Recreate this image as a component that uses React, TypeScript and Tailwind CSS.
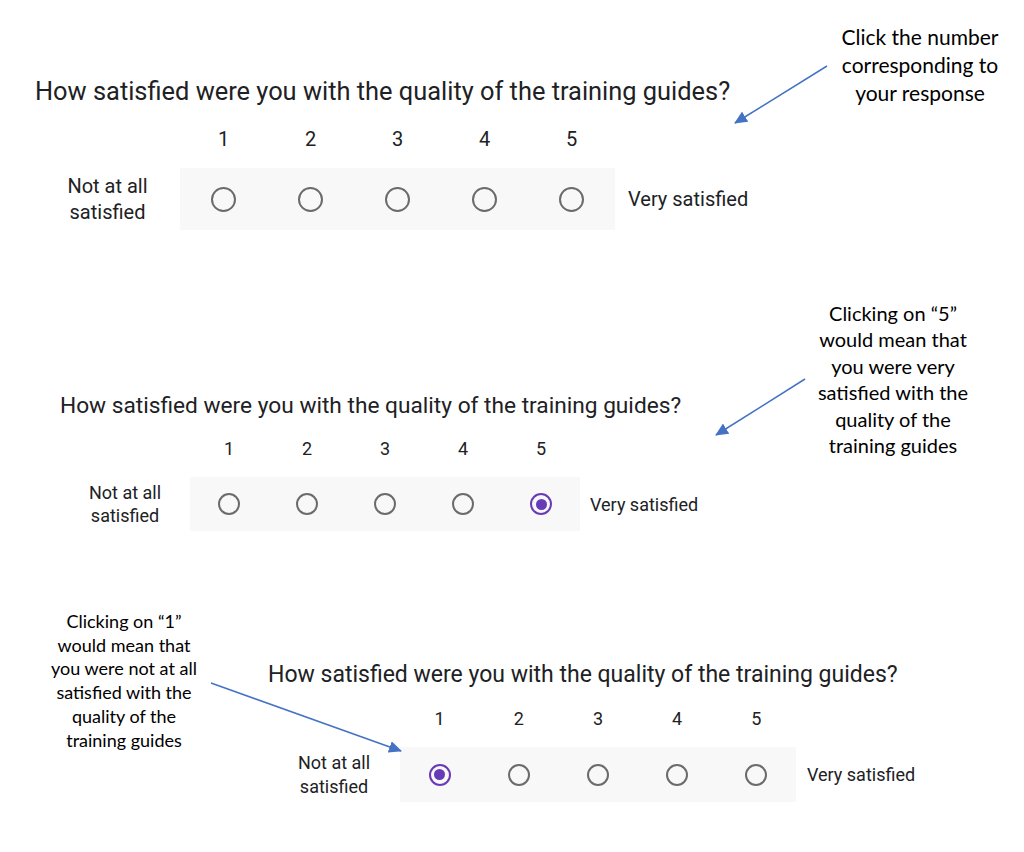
import React from 'react';

type Variant = {
  wrap: string;
  title: string;
  nums: string;
  labelW: string;
  label: string;
  col: string;
  box: string;
  radio: string;
  dot: string;
  end: string;
};

const variants: Record<string, Variant> = {
  top: {
    wrap: 'pl-[35px] pt-[76px]',
    title: 'text-[25.4px] leading-[30px]',
    nums: 'mt-[21px] text-[20px] leading-[24px]',
    labelW: 'w-[145px]',
    label: 'text-[20px] leading-[26.5px]',
    col: 'w-[87px]',
    box: 'mt-[17px] h-[62px]',
    radio: 'size-[25px] border-[2.5px]',
    dot: 'size-[12px]',
    end: 'ml-[13px] text-[20px]',
  },
  middle: {
    wrap: 'pl-[60px] pt-[152px]',
    title: 'text-[22.7px] leading-[27px]',
    nums: 'mt-[19px] text-[18px] leading-[22px]',
    labelW: 'w-[130px]',
    label: 'text-[18px] leading-[23.5px]',
    col: 'w-[78px]',
    box: 'mt-[17px] h-[54px]',
    radio: 'size-[22px] border-[2.2px]',
    dot: 'size-[11px]',
    end: 'ml-[10px] text-[18px]',
  },
  bottom: {
    wrap: 'pl-[49px] pt-[61px]',
    title: 'text-[23px] leading-[27px]',
    nums: 'mt-[20px] text-[18px] leading-[22px]',
    labelW: 'w-[132px]',
    label: 'text-[18px] leading-[23.5px]',
    col: 'w-[79.2px]',
    box: 'mt-[17px] h-[55px]',
    radio: 'size-[22px] border-[2.2px]',
    dot: 'size-[11px]',
    end: 'ml-[11px] text-[18px]',
  },
};

const escala = [1, 2, 3, 4, 5];

function Radio({ v, marcado }: { v: Variant; marcado: boolean }) {
  if (marcado) {
    return (
      <span className={`flex items-center justify-center rounded-full border-[#673ab7] ${v.radio}`}>
        <span className={`rounded-full bg-[#673ab7] ${v.dot}`} />
      </span>
    );
  }
  return <span className={`rounded-full border-[#6b6b6b] ${v.radio}`} />;
}

function Pergunta({ v, escolha }: { v: Variant; escolha?: number }) {
  return (
    <div className={`${v.wrap} font-['Roboto',sans-serif] text-[#202124]`}>
      <h2 className={`whitespace-nowrap ${v.title}`}>
        How satisfied were you with the quality of the training guides?
      </h2>
      <div className={`flex ${v.nums}`}>
        <div className={v.labelW} />
        {escala.map((n) => (
          <div key={n} className={`text-center ${v.col}`}>
            {n}
          </div>
        ))}
      </div>
      <div className="flex items-center">
        <div className={`text-center ${v.labelW} ${v.label} ${v.box} flex flex-col justify-center`}>
          <span>Not at all</span>
          <span>satisfied</span>
        </div>
        <div className={`flex items-center bg-[#f8f8f8] ${v.box}`}>
          {escala.map((n) => (
            <div key={n} className={`flex justify-center ${v.col}`}>
              <Radio v={v} marcado={escolha === n} />
            </div>
          ))}
        </div>
        <div className={`whitespace-nowrap ${v.end} ${v.box} flex items-center`}>Very satisfied</div>
      </div>
    </div>
  );
}

function Nota({ linhas, className }: { linhas: string[]; className: string }) {
  return (
    <div className={`flex flex-col items-center font-['Lato',sans-serif] text-black ${className}`}>
      {linhas.map((l) => (
        <span key={l} className="whitespace-nowrap">
          {l}
        </span>
      ))}
    </div>
  );
}

function Setas() {
  const linhas = [
    [827, 66, 735, 123],
    [805, 379, 716, 435],
    [211, 683, 401, 751],
  ];
  return (
    <svg className="pointer-events-none absolute inset-0" width="1024" height="852">
      <defs>
        <marker id="ponta" markerWidth="14" markerHeight="12" refX="12" refY="6" orient="auto" markerUnits="userSpaceOnUse">
          <path d="M0,0 L13,6 L0,12 Z" fill="#4472c4" />
        </marker>
      </defs>
      {linhas.map(([x1, y1, x2, y2]) => (
        <line key={x1} x1={x1} y1={y1} x2={x2} y2={y2} stroke="#4472c4" strokeWidth="1.5" markerEnd="url(#ponta)" />
      ))}
    </svg>
  );
}

function App() {
  return (
    <div className="relative h-[852px] w-[1024px] overflow-hidden bg-white">
      <section className="flex h-[240px] items-start">
        <Pergunta v={variants.top} />
        <Nota
          className="ml-auto mr-[14px] mt-[23px] w-[180px] text-[21px] leading-[28px]"
          linhas={['Click the number', 'corresponding to', 'your response']}
        />
      </section>

      <section className="flex h-[360px] items-start">
        <Pergunta v={variants.middle} escolha={5} />
        <Nota
          className="ml-auto mr-[36px] mt-[60px] w-[190px] text-[20px] leading-[26.4px]"
          linhas={['Clicking on \u201c5\u201d', 'would mean that', 'you were very', 'satisfied with the', 'quality of the', 'training guides']}
        />
      </section>

      <section className="flex items-start">
        <Nota
          className="ml-[29px] mt-[10px] w-[190px] text-[18px] leading-[23.7px]"
          linhas={['Clicking on \u201c1\u201d', 'would mean that', 'you were not at all', 'satisfied with the', 'quality of the', 'training guides']}
        />
        <Pergunta v={variants.bottom} escolha={1} />
      </section>

      <Setas />
    </div>
  );
}

export default App;
